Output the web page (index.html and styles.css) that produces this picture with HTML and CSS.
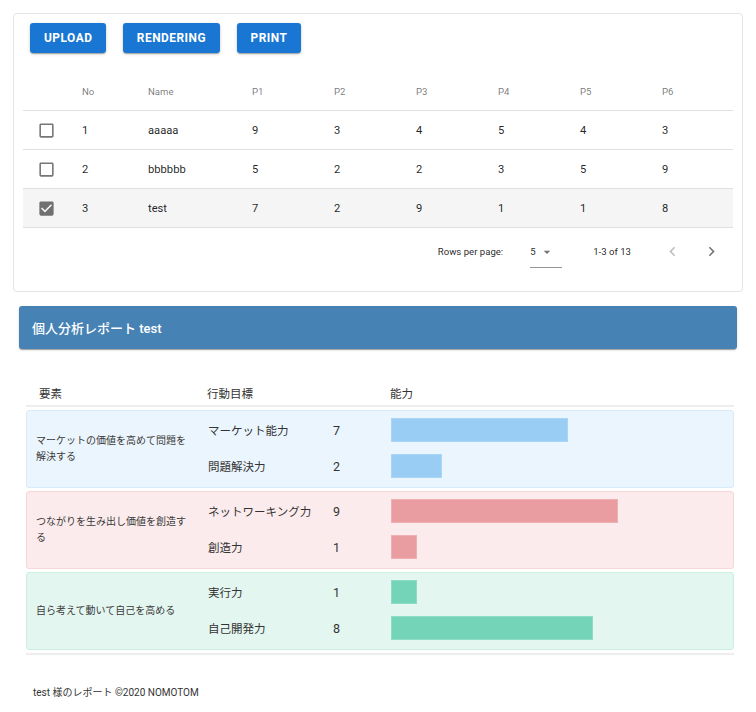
FILE: index.html
```html
<!DOCTYPE html>
<html lang="ja">
<head>
<meta charset="utf-8">
<title>個人分析レポート</title>
<link rel="stylesheet" href="styles.css">
</head>
<body>
<div class="card">
  <div class="toolbar">
    <button class="btn">UPLOAD</button>
    <button class="btn">RENDERING</button>
    <button class="btn">PRINT</button>
  </div>
  <div class="dtable">
    <div class="drow head">
      <div class="cell"></div>
      <div class="cell">No</div>
      <div class="cell">Name</div>
      <div class="cell">P1</div>
      <div class="cell">P2</div>
      <div class="cell">P3</div>
      <div class="cell">P4</div>
      <div class="cell">P5</div>
      <div class="cell">P6</div>
    </div>
    <div class="drow">
      <div class="cell chk"><svg viewBox="0 0 24 24" class="cb"><path d="M19 5v14H5V5h14m0-2H5c-1.11 0-2 .9-2 2v14c0 1.1.89 2 2 2h14c1.1 0 2-.9 2-2V5c0-1.1-.9-2-2-2z"/></svg></div>
      <div class="cell">1</div>
      <div class="cell">aaaaa</div>
      <div class="cell">9</div>
      <div class="cell">3</div>
      <div class="cell">4</div>
      <div class="cell">5</div>
      <div class="cell">4</div>
      <div class="cell">3</div>
    </div>
    <div class="drow">
      <div class="cell chk"><svg viewBox="0 0 24 24" class="cb"><path d="M19 5v14H5V5h14m0-2H5c-1.11 0-2 .9-2 2v14c0 1.1.89 2 2 2h14c1.1 0 2-.9 2-2V5c0-1.1-.9-2-2-2z"/></svg></div>
      <div class="cell">2</div>
      <div class="cell">bbbbbb</div>
      <div class="cell">5</div>
      <div class="cell">2</div>
      <div class="cell">2</div>
      <div class="cell">3</div>
      <div class="cell">5</div>
      <div class="cell">9</div>
    </div>
    <div class="drow selected">
      <div class="cell chk"><svg viewBox="0 0 24 24" class="cb"><path d="M19 3H5c-1.11 0-2 .9-2 2v14c0 1.1.89 2 2 2h14c1.11 0 2-.9 2-2V5c0-1.1-.89-2-2-2zm-9 14l-5-5 1.410-1.41L10 14.17l7.59-7.59L19 8l-9 9z"/></svg></div>
      <div class="cell">3</div>
      <div class="cell">test</div>
      <div class="cell">7</div>
      <div class="cell">2</div>
      <div class="cell">9</div>
      <div class="cell">1</div>
      <div class="cell">1</div>
      <div class="cell">8</div>
    </div>
    <div class="pager">
      <span class="caption">Rows per page:</span>
      <span class="select"><span class="sel-val">5</span><svg viewBox="0 0 24 24" class="arrow"><path d="M7 10l5 5 5-5z"/></svg></span>
      <span class="caption range">1-3 of 13</span>
      <span class="actions">
        <span class="iconbtn disabled"><svg viewBox="0 0 24 24"><path d="M15.41 16.59L10.83 12l4.58-4.59L14 6l-6 6 6 6 1.41-1.41z"/></svg></span>
        <span class="iconbtn"><svg viewBox="0 0 24 24"><path d="M8.59 16.59L13.17 12 8.59 7.41 10 6l6 6-6 6-1.41-1.41z"/></svg></span>
      </span>
    </div>
  </div>
</div>

<div class="report">
  <div class="report-bar">個人分析レポート test</div>
</div>

<div class="analysis">
  <div class="ahead">
    <div>要素</div>
    <div>行動目標</div>
    <div>能力</div>
  </div>
  <div class="group blue">
    <div class="elem">マーケットの価値を高めて問題を<br>解決する</div>
    <div class="items">
      <div class="item"><span class="goal">マーケット能力</span><span class="num">7</span><span class="bar" style="width:177px"></span></div>
      <div class="item"><span class="goal">問題解決力</span><span class="num">2</span><span class="bar" style="width:51px"></span></div>
    </div>
  </div>
  <div class="group pink">
    <div class="elem">つながりを生み出し価値を創造す<br>る</div>
    <div class="items">
      <div class="item"><span class="goal">ネットワーキング力</span><span class="num">9</span><span class="bar" style="width:227px"></span></div>
      <div class="item"><span class="goal">創造力</span><span class="num">1</span><span class="bar" style="width:26px"></span></div>
    </div>
  </div>
  <div class="group green">
    <div class="elem">自ら考えて動いて自己を高める</div>
    <div class="items">
      <div class="item"><span class="goal">実行力</span><span class="num">1</span><span class="bar" style="width:26px"></span></div>
      <div class="item"><span class="goal">自己開発力</span><span class="num">8</span><span class="bar" style="width:202px"></span></div>
    </div>
  </div>
  <div class="aend"></div>
</div>

<footer class="footer">test 様のレポート ©2020 NOMOTOM</footer>
</body>
</html>
```

FILE: styles.css
```css
* { box-sizing: border-box; }
html, body { margin: 0; padding: 0; background: #fff; }
body {
  font-family: Roboto, "Noto Sans CJK JP", sans-serif;
  color: rgba(0,0,0,0.87);
  width: 756px;
}

.card {
  margin: 13px 0 0 13px;
  width: 730px;
  border: 1px solid #e4e4e4;
  border-radius: 4px;
  padding: 9px 9px 16px 9px;
}

.toolbar {
  display: flex;
  gap: 16.5px;
  padding-left: 7px;
}
.btn {
  height: 30px;
  padding: 0 14px;
  border: none;
  border-radius: 3px;
  background: #1976d2;
  color: #fff;
  font-family: Roboto, sans-serif;
  font-size: 11.9px;
  font-weight: 700;
  letter-spacing: 0.5px;
  box-shadow: 0 2px 1px -1px rgba(0,0,0,.2), 0 1px 2px 0 rgba(0,0,0,.14), 0 1px 4px 0 rgba(0,0,0,.12);
}

.dtable { margin-top: 19px; }
.drow {
  display: grid;
  grid-template-columns: 59px 66px 104px 82px 82px 82px 82px 82px 1fr;
  height: 39px;
  align-items: center;
  border-bottom: 1px solid #e0e0e0;
  font-size: 11.2px;
}
.drow.head {
  font-size: 9.6px;
  color: rgba(0,0,0,0.54);
}
.drow.selected { background: #f5f5f5; }
.cell { white-space: nowrap; }
.chk { padding-left: 14px; display: flex; align-items: center; }
.cb { width: 19px; height: 19px; fill: rgba(0,0,0,0.54); display: block; }

.pager {
  height: 47px;
  display: flex;
  align-items: center;
  justify-content: flex-end;
  padding-right: 2px;
  font-size: 9.6px;
  color: rgba(0,0,0,0.87);
}
.caption { white-space: nowrap; }
.select {
  margin-left: 27px;
  width: 32px;
  height: 24px;
  display: flex;
  align-items: center;
  border-bottom: 1px solid rgba(0,0,0,0.42);
  margin-top: 8px;
  padding-bottom: 7px;
  font-size: 9.6px;
}
.sel-val { width: 7px; }
.arrow { width: 16px; height: 16px; fill: rgba(0,0,0,0.54); margin-left: 2px; }
.range { margin-left: 31px; }
.actions { margin-left: 22px; display: flex; }
.iconbtn {
  width: 39px; height: 39px;
  display: flex; align-items: center; justify-content: center;
}
.iconbtn svg { width: 19px; height: 19px; fill: rgba(0,0,0,0.54); }
.iconbtn.disabled svg { fill: rgba(0,0,0,0.26); }

.report { margin: 14px 0 0 19px; width: 718px; }
.report-bar {
  height: 43px;
  background: #4682b4;
  border-radius: 3px;
  color: #fff;
  font-size: 13px;
  font-weight: 500;
  display: flex;
  align-items: center;
  padding-left: 13px;
  box-shadow: 0 2px 1px -1px rgba(0,0,0,.2), 0 1px 1px 0 rgba(0,0,0,.14), 0 1px 3px 0 rgba(0,0,0,.12);
}

.analysis { margin: 33px 0 0 26px; width: 708px; }
.ahead {
  display: grid;
  grid-template-columns: 181px 183px 1fr;
  height: 25px;
  align-items: center;
  font-size: 11.5px;
  color: #333;
  border-bottom: 2px solid #eeeeee;
  padding-bottom: 2px;
}
.ahead div:first-child { padding-left: 13px; }

.group {
  margin-top: 3px;
  border: 1px solid;
  border-radius: 3px;
  padding: 1px 0 3px 9px;
  display: grid;
  grid-template-columns: 172px 1fr;
  align-items: center;
}
.elem { font-size: 10px; line-height: 16px; color: #3a3a3a; padding-top: 1px; }
.items { display: flex; flex-direction: column; }
.item {
  height: 36px;
  display: grid;
  grid-template-columns: 125px 58px 1fr;
  align-items: center;
}
.goal { font-size: 11.5px; color: #333; white-space: nowrap; }
.num { font-size: 12.5px; color: #333; }
.bar { height: 24px; display: block; border: 1px solid; }

.blue { background: #ebf5fd; border-color: #d8ebfa; }
.blue .bar { background: #9acdf4; border-color: #a9d5f7; }
.pink { background: #fbebec; border-color: #f7d6d9; }
.pink .bar { background: #e99da1; border-color: #eeb0b3; }
.green { background: #e3f6ef; border-color: #cbeee1; }
.green .bar { background: #74d4b7; border-color: #8cdcc3; }

.aend { margin-top: 3px; border-top: 2px solid #eeeeee; }

.footer {
  margin: 29px 0 0 33px;
  font-size: 10px;
  color: #333;
}
```
